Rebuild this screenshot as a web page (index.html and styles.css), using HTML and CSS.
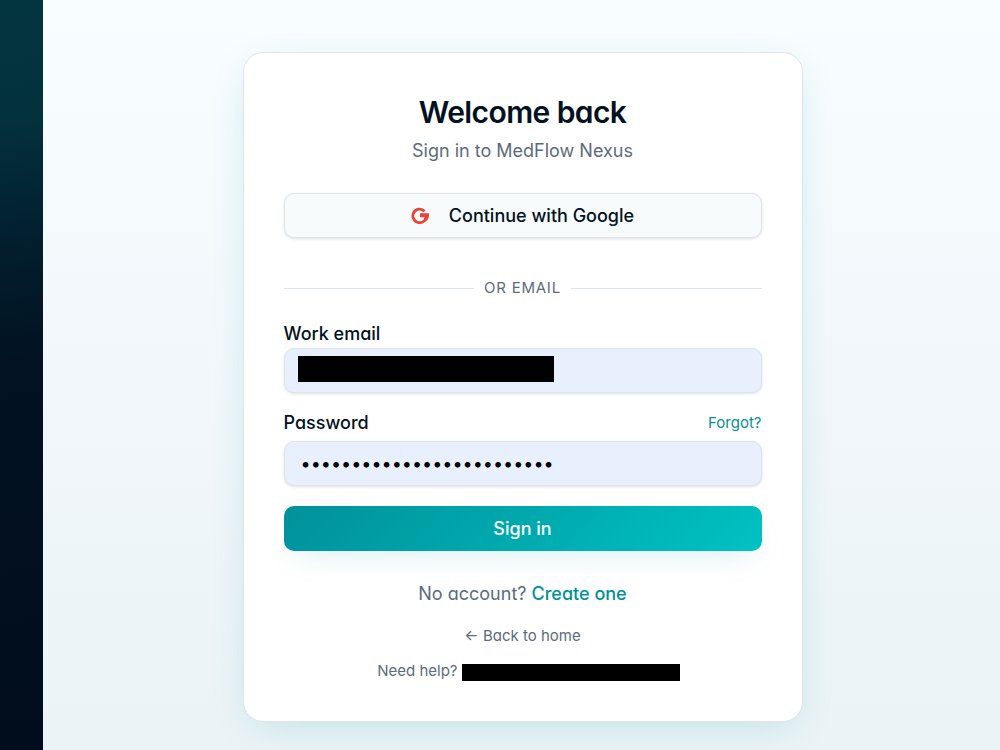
FILE: index.html
```
<!DOCTYPE html>
<html lang="en">
<head>
  <meta charset="UTF-8" />
  <meta name="viewport" content="width=device-width, initial-scale=1.0" />
  <title>Sign in - MedFlow Nexus</title>
  <link rel="stylesheet" href="styles.css">
</head>
<body>
  <div class="page">
    <aside class="brand-panel"></aside>
    <main class="content">
      <div class="card">
        <h1>Welcome back</h1>
        <p class="subtitle">Sign in to MedFlow Nexus</p>

        <button type="button" class="btn btn-google">
          <svg class="google-icon" viewBox="0 0 18 18" aria-hidden="true">
            <path d="M13.6 4.2A6.8 6.8 0 1 0 15.4 9.6" fill="none" stroke="#ea4335" stroke-width="2.8" />
            <path d="M9 6.2H18V8.8Q17.8 11.6 16 13.8L13 11.6L13.6 10.2H9Z" fill="#ea4335" />
          </svg>
          Continue with Google
        </button>

        <div class="divider">OR EMAIL</div>

        <form class="login-form">
          <div class="label-row">
            <label for="email">Work email</label>
          </div>
          <div class="field">
            <input type="email" id="email" autocomplete="email" />
            <span class="redacted redacted-email"></span>
          </div>
          <div class="label-row password-row">
            <label for="password">Password</label>
            <a href="#" class="forgot">Forgot?</a>
          </div>
          <input type="password" id="password" value="1234567890123456789012345" />
          <button type="submit" class="btn btn-primary">Sign in</button>
        </form>

        <p class="signup">No account? <a href="#">Create one</a></p>
        <p class="small"><a href="#">← Back to home</a></p>
        <p class="small help">Need help? <span class="redacted redacted-help"></span></p>
      </div>
    </main>
  </div>
</body>
</html>
```

FILE: styles.css
```
* {
  box-sizing: border-box;
}
body {
  margin: 0;
  font-family: Inter, "Liberation Sans", sans-serif;
  font-feature-settings: "cv11";
  font-size: 18px;
  line-height: 24px;
  color: #021222;
}
.page {
  display: flex;
  min-height: 100vh;
}
.brand-panel {
  width: 43px;
  flex-shrink: 0;
  background: linear-gradient(172deg, #033540 0%, #03323d 15%, #021f2e 32%, #021222 48%, #010d1c 100%);
}
.content {
  flex: 1;
  display: flex;
  justify-content: center;
  align-items: flex-start;
  padding: 52px 20px 28px 22px;
  background: linear-gradient(180deg, #f8fdff 0%, #f2f7fb 50%, #eaf3f6 100%);
}
.card {
  width: 100%;
  max-width: 560px;
  padding: 40px 40px 38px;
  background: #fff;
  border: 1px solid #dbe5ea;
  border-radius: 20px;
  box-shadow: 0 10px 40px -10px rgba(0, 145, 155, 0.2);
}
h1 {
  margin: 0;
  font-size: 30px;
  line-height: 38px;
  font-weight: 600;
  letter-spacing: -0.02em;
  text-align: center;
}
.subtitle {
  margin: 8px 0 30px;
  text-align: center;
  color: #5b6b7c;
}
.btn {
  display: flex;
  align-items: center;
  justify-content: center;
  width: 100%;
  height: 45px;
  font: inherit;
  font-weight: 500;
  border-radius: 10px;
  cursor: pointer;
}
.btn-google {
  gap: 20px;
  color: #021222;
  background: #f7fbfc;
  border: 1px solid #dbe5ea;
  box-shadow: 0 1px 3px rgba(0, 0, 0, 0.12);
}
.google-icon {
  width: 18px;
  height: 18px;
}
.divider {
  display: flex;
  align-items: center;
  gap: 10px;
  margin: 38px 0 22px;
  font-size: 15px;
  letter-spacing: 0.05em;
  color: #5b6b7c;
}
.divider::before,
.divider::after {
  content: "";
  flex: 1;
  height: 1px;
  background: #dbe5ea;
}
.label-row {
  display: flex;
  align-items: center;
  justify-content: space-between;
  margin-bottom: 2px;
  font-weight: 500;
}
.password-row {
  margin: 18px 0 6px;
}
.forgot {
  font-size: 15px;
  font-weight: 400;
}
a {
  color: #00919b;
  text-decoration: none;
}
.field {
  position: relative;
}
input {
  display: block;
  width: 100%;
  height: 45px;
  padding: 0 16px;
  font: inherit;
  color: #000;
  background: #e8f0fe;
  border: 1px solid #dbe5ea;
  border-radius: 10px;
  box-shadow: 0 1px 3px rgba(0, 0, 0, 0.12);
}
.redacted {
  background: #000;
}
.redacted-email {
  position: absolute;
  top: 8px;
  left: 14px;
  width: 256px;
  height: 26px;
}
.btn-primary {
  margin-top: 20px;
  color: #fff;
  background: linear-gradient(135deg, #00919b, #00c2c2);
  border: none;
  box-shadow: 0 12px 32px -12px rgba(0, 145, 155, 0.2);
}
.signup {
  margin: 31px 0 18px;
  text-align: center;
  color: #5b6b7c;
}
.signup a {
  font-weight: 500;
}
.small {
  margin: 0 0 11px;
  font-size: 15px;
  text-align: center;
  color: #5b6b7c;
}
.small a {
  color: #5b6b7c;
}
.help {
  margin-bottom: 0;
}
/* the bar is a bit wider than the address under it */
.redacted-help {
  display: inline-block;
  width: 218px;
  height: 17px;
  margin-right: -12px;
  vertical-align: -5px;
}
```
